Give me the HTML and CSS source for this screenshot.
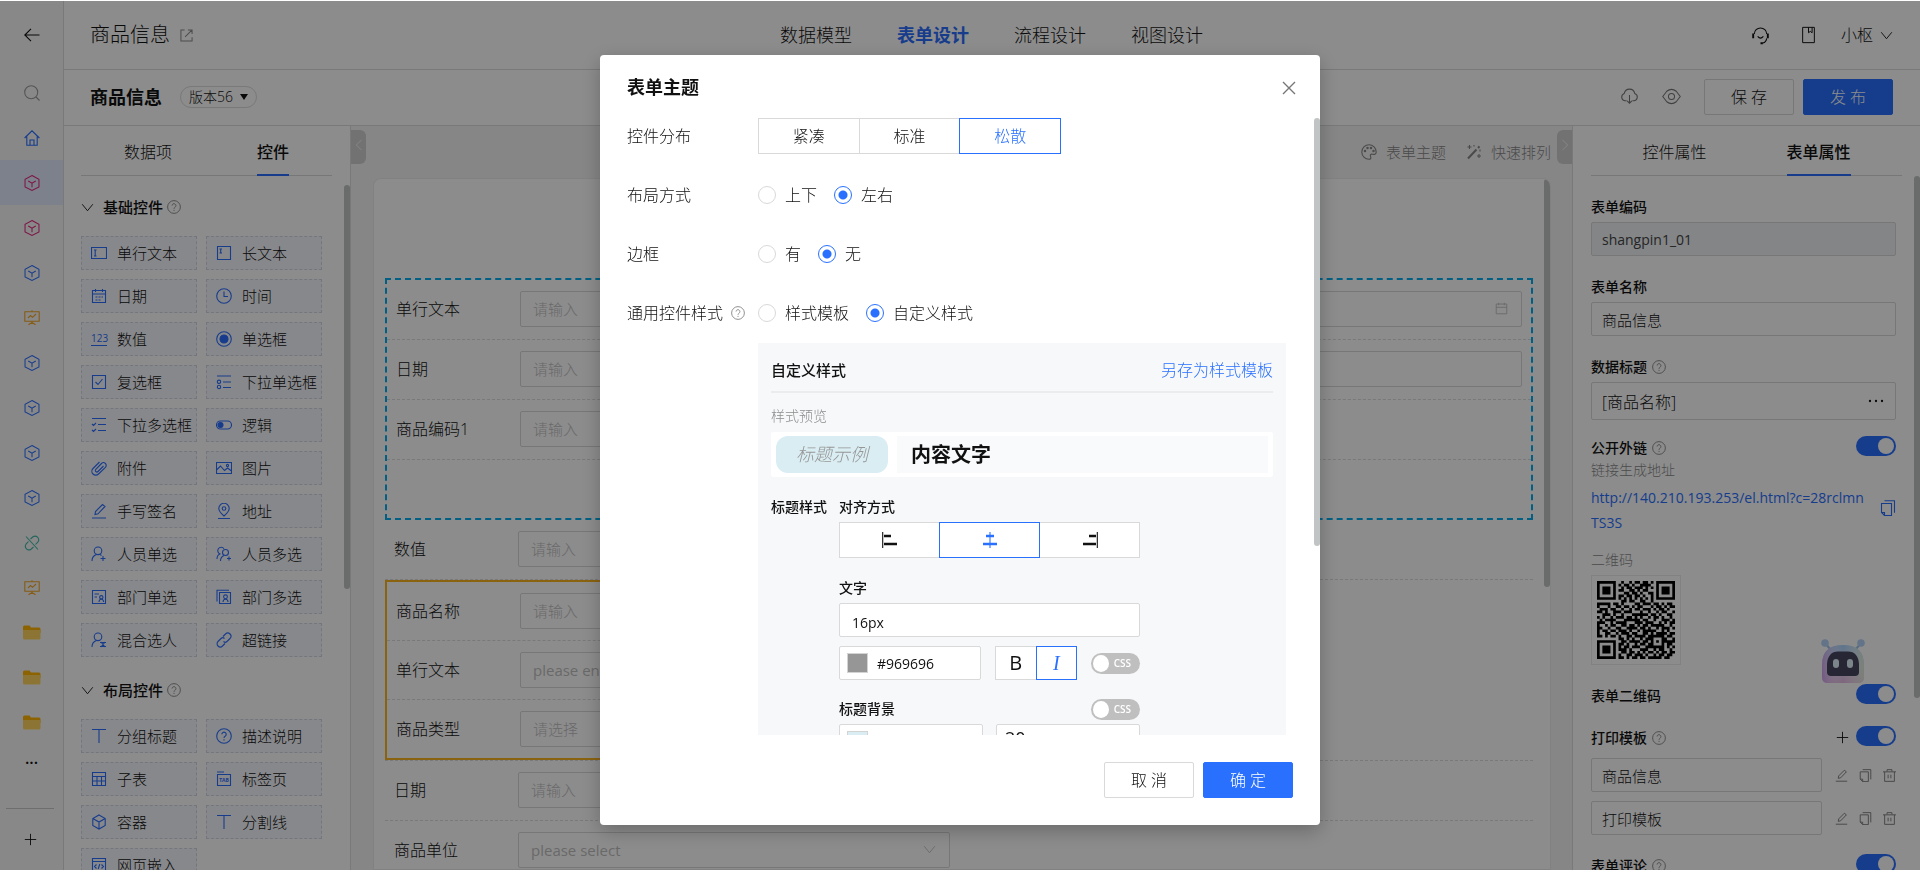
FILE: index.html
```html
<!DOCTYPE html>
<html lang="zh-CN">
<head>
  <meta charset="UTF-8">
  <meta name="viewport" content="width=device-width, initial-scale=1.0">
  <title>商品信息 - 表单设计</title>
  <link rel="stylesheet" href="styles.css">
</head>
<body>
  <!-- Icon sprite -->
  <svg class="sprite" aria-hidden="true">
    <symbol id="i-back" viewBox="0 0 16 16"><path d="M15.5 8H.8M7 1.8.8 8 7 14.2"/></symbol>
    <symbol id="i-search" viewBox="0 0 16 16"><circle cx="7.2" cy="7.2" r="6.5"/><path d="m12 12 3.5 3.5"/></symbol>
    <symbol id="i-home" viewBox="0 0 16 16"><path d="M.6 8 8 .8 15.4 8M2.8 6.5v8.7h10.4V6.5M6 15v-5h4v5"/></symbol>
    <symbol id="i-cube" viewBox="0 0 16 17"><path d="M8 .6 15.4 4.600v8L8 16.400.6 12.600v-8zM4 6.400l4 2.300 4-2.300M8 8.700v4.300"/></symbol>
    <symbol id="i-board" viewBox="0 0 16 16"><path d="M.8 1.800h14.400v9.400H.8zM8 .3v1.500M4 8l2.500-2.500 2 1.800L12 4M8 11.500v2.500M4.500 14.800 8 12.500l3.500 2.300"/></symbol>
    <symbol id="i-unlink" viewBox="0 0 16 16"><path d="M2 1.500 14 14.500M6.500 4 9 1.800a3.600 3.600 0 0 1 5 5L11.500 9.500M9.500 12 7 14.200a3.600 3.600 0 0 1-5-5L4.500 6.500"/></symbol>
    <symbol id="i-folder" viewBox="0 0 18 15"><path class="f1" d="M0 2Q0 .5 1.500.5H6.500l1.500 2H16q1.500 0 1.500 1.500V8H0z"/><path class="f2" d="M0 5h17.500v8q0 1.500-1.500 1.500H1.500Q0 14.500 0 13z"/></symbol>
    <symbol id="i-plus" viewBox="0 0 16 16"><path d="M8 1v14M1 8h14"/></symbol>
    <symbol id="i-share" viewBox="0 0 14 14"><path d="M5 1H1v12h12V9M8.500 1H13v4.500M13 1 5.500 8.500"/></symbol>
    <symbol id="i-down" viewBox="0 0 16 16"><path d="m1.500 4 6.500 8 6.500-8"/></symbol>
    <symbol id="i-left" viewBox="0 0 16 16"><path d="M11 2 5 8l6 6"/></symbol>
    <symbol id="i-right" viewBox="0 0 16 16"><path d="m5 2 6 6-6 6"/></symbol>
    <symbol id="i-help" viewBox="0 0 16 16"><circle cx="8" cy="8" r="7.300"/><path d="M5.800 6.300a2.200 2.200 0 1 1 3.300 2Q8 9 8 10M8 11.300v1.200"/></symbol>
    <symbol id="i-headset" viewBox="0 0 20 20"><path d="M3.500 8.500a6.500 6.500 0 0 1 13 0M7 11q3 3.500 6 0M16.500 13q-.5 4-4 5"/><path class="bold" d="M2.300 8v5M17.700 8v5M10 18.200h2.500"/></symbol>
    <symbol id="i-book" viewBox="0 0 16 20"><path d="M1.500 1.500h13v17h-13zM8 1.500v6l2-1.500 2 1.500v-6"/></symbol>
    <symbol id="i-cloud" viewBox="0 0 20 16"><path d="M7 12.500H5A4 4 0 0 1 4.500 4.800a5.600 5.600 0 0 1 11 0A4 4 0 0 1 15 12.500h-2M10 6.500v8.500M7.500 12.500 10 15l2.500-2.500"/></symbol>
    <symbol id="i-eye" viewBox="0 0 20 16"><path d="M.8 8 5 2.500Q10-1.500 15 2.500L19.200 8 15 13.500q-5 4-10 0z"/><circle cx="10" cy="8" r="3.200"/></symbol>
    <symbol id="i-palette" viewBox="0 0 16 16"><path d="M8 15.200A7.200 7.200 0 1 1 15.200 8c0 2.500-2 2.500-3.500 2.200-2-.4-3 .8-2 2.800.6 1.200-.2 2.200-1.700 2.200z"/><circle cx="4" cy="7" r=".7"/><circle cx="6.500" cy="4" r=".7"/><circle cx="10" cy="4" r=".7"/><circle cx="12.500" cy="7" r=".7"/></symbol>
    <symbol id="i-wand" viewBox="0 0 16 16"><path class="bold" d="M2 14.500 10.500 5.500M12 4l1.500-1.700"/><path d="M3.500 1v4M1.500 3h4M13 10v4M11 12h4M14 5.500v2M8 1v1.500"/></symbol>
    <symbol id="i-text" viewBox="0 0 16 16"><path d="M.5 2.500h15v11H.5zM3 5h2.500M3 11h2.500M4.200 5v6"/></symbol>
    <symbol id="i-longtext" viewBox="0 0 16 16"><path d="M1.500 1.500h13v13h-13zM3.500 4H6M3.500 8H6M4.700 4v4"/></symbol>
    <symbol id="i-date" viewBox="0 0 16 16"><path d="M1.500 2.500h13v12h-13zM1.500 6h13M4.500 1v3M11.500 1v3M4.500 9h2M7.500 9h2M10.500 9h1.500M4.500 12h2M7.500 12h2"/></symbol>
    <symbol id="i-calendar" viewBox="0 0 16 16"><path d="M1.500 2.500h13v12h-13zM1.500 6.500h13M4.500 1v3M11.500 1v3"/></symbol>
    <symbol id="i-time" viewBox="0 0 16 16"><circle cx="8" cy="8" r="7.300"/><path d="M8 3.500V8.500h4"/></symbol>
    <symbol id="i-radio" viewBox="0 0 16 16"><circle cx="8" cy="8" r="7.300"/><circle class="solid" cx="8" cy="8" r="4"/></symbol>
    <symbol id="i-check" viewBox="0 0 16 16"><path d="M1.500 1.500h13v13h-13zM4.500 8l2.500 2.500L11.500 5"/></symbol>
    <symbol id="i-selone" viewBox="0 0 16 16"><path d="M1 2h14M7 8h8M7 13.500h8"/><circle cx="3" cy="7.800" r="1.700"/><circle cx="3" cy="13" r="1.700"/></symbol>
    <symbol id="i-selmulti" viewBox="0 0 16 16"><path d="M1 1.500h14M7 7.500h8M7 13.500h8M1 7l1.500 1.500L5 6M1 13l1.500 1.500L5 12"/></symbol>
    <symbol id="i-logic" viewBox="0 0 16 16"><rect x=".5" y="4" width="15" height="8" rx="4"/><circle class="solid" cx="4.500" cy="8" r="2.500"/></symbol>
    <symbol id="i-clip" viewBox="0 0 16 16"><path d="M12.500 6 7 11.500a1.500 1.500 0 0 1-2.200-2.200L10.500 3.500a2.700 2.700 0 0 1 3.900 3.900L7.500 14a3.700 3.700 0 0 1-5.500-5.500L8.500 2"/></symbol>
    <symbol id="i-img" viewBox="0 0 16 16"><path d="M.5 2.500h15v11H.5zM.5 10l4-4 4 4.500 3-2.500 4 3"/><circle cx="11.500" cy="5.500" r="1.100"/></symbol>
    <symbol id="i-pen" viewBox="0 0 16 16"><path d="M1 15h14M4 11.500l.5-3L11.500 1.500l2.500 2L7 10.800z"/></symbol>
    <symbol id="i-pin" viewBox="0 0 16 16"><path d="M8 13Q2.800 8.500 2.800 5.500a5.200 5.200 0 0 1 10.400 0Q13.200 8.500 8 13zM2 15.500h12"/><circle cx="8" cy="5.500" r="1.800"/></symbol>
    <symbol id="i-user" viewBox="0 0 16 16"><circle cx="7" cy="4.800" r="3.800"/><path d="M1 15q0-5 4.500-6.500M9 8.500l1.500 1M12 10v5M9.500 12.500h5"/></symbol>
    <symbol id="i-users" viewBox="0 0 16 16"><path d="M4.500 8A3.400 3.400 0 1 1 8 2.800M1 13q0-4 3-5"/><circle cx="9.500" cy="6.500" r="3"/><path d="M4.500 15q0-4 3.500-5.500M13 10.500v4M11 12.500h4"/></symbol>
    <symbol id="i-dept" viewBox="0 0 16 16"><path d="M1.500 1.500h13v13h-13zM3.500 5H8M3.500 8H6M8 13q0-2.500 2.300-3 2.300.5 2.300 3"/><circle cx="10.300" cy="8.300" r="1.700"/></symbol>
    <symbol id="i-depts" viewBox="0 0 16 16"><path d="M3.500 3.500h11v11h-11zM1 12.500V1.200h12M7 13q0-2.500 2.500-3 2.500.5 2.500 3"/><circle cx="9.500" cy="7.800" r="1.900"/></symbol>
    <symbol id="i-mix" viewBox="0 0 16 16"><circle cx="7" cy="4.800" r="3.800"/><path d="M1 15q0-5 4.500-6.500M9 10.500h6M15 14.500H9M10 10l4 5M14 10l-4 5"/></symbol>
    <symbol id="i-link" viewBox="0 0 16 16"><path d="M7 4.500 9.500 2a3 3 0 0 1 4.500 4.500L11 9.500a2.500 2.500 0 0 1-3.500 0M9 11.500 6.500 14A3 3 0 0 1 2 9.500L5 6.500a2.500 2.500 0 0 1 3.500 0"/></symbol>
    <symbol id="i-t" viewBox="0 0 16 16"><path d="M1 1.500h14M8 1.500V15"/></symbol>
    <symbol id="i-table" viewBox="0 0 16 16"><path d="M1.500 1.500h13v13h-13zM1.500 5.500h13M1.500 10h13M6 5.500v9M10.500 5.500v9"/></symbol>
    <symbol id="i-box" viewBox="0 0 16 16"><path d="M8 1l6.200 3.500v7L8 15l-6.200-3.500v-7zM1.800 4.500 8 8l6.200-3.500M8 8v7"/></symbol>
    <symbol id="i-web" viewBox="0 0 16 16"><path d="M1.500 1.500h13v13h-13zM1.500 4.500h13M5.500 7.500l-2 2 2 2M10.500 7.500l2 2-2 2M8.800 7l-1.600 5"/></symbol>
    <symbol id="i-copy" viewBox="0 0 16 16"><path d="M1.500 3.500h10v12H4.500l-3-3zM4.500.8h10v12M1.500 12.500h3v3"/></symbol>
    <symbol id="i-trash" viewBox="0 0 16 16"><path d="M0 3.500h16M5 3V.8h6V3M2 3.500v11.700h12V3.500M6.300 7v4.500M9.700 7v4.500"/></symbol>
    <symbol id="i-dots" viewBox="0 0 16 16"><circle class="solid" cx="2" cy="8" r=".6"/><circle class="solid" cx="8" cy="8" r=".6"/><circle class="solid" cx="14" cy="8" r=".6"/></symbol>
    <symbol id="i-close" viewBox="0 0 16 16"><path d="m2 2 12 12M14 2 2 14"/></symbol>
    <symbol id="i-al" viewBox="0 0 16 16"><path d="M.7 0v16"/><path class="bar" d="M2 4h7M2 12h13"/></symbol>
    <symbol id="i-ac" viewBox="0 0 16 16"><path d="M8 0v16"/><path class="bar" d="M4 4h8M1 12h14"/></symbol>
    <symbol id="i-ar" viewBox="0 0 16 16"><path d="M15.300 0v16"/><path class="bar" d="M7 4h7M1 12h13"/></symbol>
    <symbol id="i-bot" viewBox="0 0 44 46">
      <defs>
        <linearGradient id="bot-g" x1="0" y1="0" x2="0" y2="1">
          <stop offset="0" stop-color="#a9d4ff"/><stop offset=".55" stop-color="#dcdcf2"/><stop offset="1" stop-color="#e6b8e4"/>
        </linearGradient>
        <linearGradient id="bot-s" x1="0" y1="0" x2="1" y2="0">
          <stop offset="0" stop-color="#cf9bef" stop-opacity=".8"/><stop offset=".5" stop-color="#fff" stop-opacity="0"/><stop offset="1" stop-color="#dff0d8" stop-opacity=".8"/>
        </linearGradient>
      </defs>
      <path class="ant" d="m4 4 5 6M40 4l-5 6"/>
      <circle class="knob" cx="4" cy="4" r="3.800"/><circle class="knob" cx="40" cy="4" r="3.800"/>
      <path class="h1" d="M1 26Q1 6 22 6t21 20v12q0 6-6 6H7q-6 0-6-6z"/>
      <path class="h2" d="M1 26Q1 6 22 6t21 20v12q0 6-6 6H7q-6 0-6-6z"/>
      <path class="face" d="M6 25Q7 12.500 17 12.500h10q10 0 11 12.500v8q0 4-4 4H10q-4 0-4-4z"/>
      <rect class="eye" x="12" y="20" width="6" height="9" rx="3"/><rect class="eye" x="26" y="20" width="6" height="9" rx="3"/>
    </symbol>
  </svg>

  <div class="shell">
    <nav class="rail" aria-label="应用导航">
      <a class="rail-item back" href="#" aria-label="返回"><svg class="icon"><use href="#i-back"/></svg></a>
      <a class="rail-item muted" href="#" aria-label="搜索"><svg class="icon"><use href="#i-search"/></svg></a>
      <a class="rail-item blue" href="#" aria-label="首页"><svg class="icon"><use href="#i-home"/></svg></a>
      <a class="rail-item pink active" href="#" aria-label="应用"><svg class="icon"><use href="#i-cube"/></svg></a>
      <a class="rail-item pink" href="#" aria-label="应用"><svg class="icon"><use href="#i-cube"/></svg></a>
      <a class="rail-item blue" href="#" aria-label="应用"><svg class="icon"><use href="#i-cube"/></svg></a>
      <a class="rail-item orange" href="#" aria-label="报表"><svg class="icon"><use href="#i-board"/></svg></a>
      <a class="rail-item blue" href="#" aria-label="应用"><svg class="icon"><use href="#i-cube"/></svg></a>
      <a class="rail-item blue" href="#" aria-label="应用"><svg class="icon"><use href="#i-cube"/></svg></a>
      <a class="rail-item blue" href="#" aria-label="应用"><svg class="icon"><use href="#i-cube"/></svg></a>
      <a class="rail-item blue" href="#" aria-label="应用"><svg class="icon"><use href="#i-cube"/></svg></a>
      <a class="rail-item teal" href="#" aria-label="外链"><svg class="icon"><use href="#i-unlink"/></svg></a>
      <a class="rail-item orange" href="#" aria-label="报表"><svg class="icon"><use href="#i-board"/></svg></a>
      <a class="rail-item" href="#" aria-label="文件夹"><svg class="icon folder"><use href="#i-folder"/></svg></a>
      <a class="rail-item" href="#" aria-label="文件夹"><svg class="icon folder"><use href="#i-folder"/></svg></a>
      <a class="rail-item" href="#" aria-label="文件夹"><svg class="icon folder"><use href="#i-folder"/></svg></a>
      <a class="rail-item more" href="#">...</a>
      <a class="rail-item add" href="#" aria-label="新增"><svg class="icon sm"><use href="#i-plus"/></svg></a>
    </nav>

    <div class="workspace">
      <header class="topbar">
        <div class="topbar-title">商品信息 <svg class="icon sm"><use href="#i-share"/></svg></div>
        <nav class="topbar-nav">
          <a href="#">数据模型</a>
          <a class="active" href="#">表单设计</a>
          <a href="#">流程设计</a>
          <a href="#">视图设计</a>
        </nav>
        <div class="topbar-user">
          <svg class="icon lg"><use href="#i-headset"/></svg>
          <svg class="icon book"><use href="#i-book"/></svg>
          <button class="user-btn" type="button">小枢 <svg class="icon sm"><use href="#i-down"/></svg></button>
        </div>
      </header>

      <div class="subbar">
        <h1>商品信息</h1>
        <button class="version" type="button">版本56 <span class="caret"></span></button>
        <div class="subbar-actions">
          <svg class="icon lg"><use href="#i-cloud"/></svg>
          <svg class="icon lg"><use href="#i-eye"/></svg>
          <button class="btn" type="button">保 存</button>
          <button class="btn primary" type="button">发 布</button>
        </div>
      </div>

      <div class="designer">
        <!-- Widget palette -->
        <aside class="palette">
          <div class="tabs">
            <button class="tab" type="button">数据项</button>
            <button class="tab active" type="button">控件</button>
          </div>
          <section class="widget-group">
            <h2><svg class="icon sm"><use href="#i-down"/></svg>基础控件<svg class="icon help"><use href="#i-help"/></svg></h2>
            <div class="widgets">
              <button type="button"><svg class="icon"><use href="#i-text"/></svg>单行文本</button>
              <button type="button"><svg class="icon"><use href="#i-longtext"/></svg>长文本</button>
              <button type="button"><svg class="icon"><use href="#i-date"/></svg>日期</button>
              <button type="button"><svg class="icon"><use href="#i-time"/></svg>时间</button>
              <button type="button"><span class="num-icon" aria-hidden="true">123</span>数值</button>
              <button type="button"><svg class="icon"><use href="#i-radio"/></svg>单选框</button>
              <button type="button"><svg class="icon"><use href="#i-check"/></svg>复选框</button>
              <button type="button"><svg class="icon"><use href="#i-selone"/></svg>下拉单选框</button>
              <button type="button"><svg class="icon"><use href="#i-selmulti"/></svg>下拉多选框</button>
              <button type="button"><svg class="icon"><use href="#i-logic"/></svg>逻辑</button>
              <button type="button"><svg class="icon"><use href="#i-clip"/></svg>附件</button>
              <button type="button"><svg class="icon"><use href="#i-img"/></svg>图片</button>
              <button type="button"><svg class="icon"><use href="#i-pen"/></svg>手写签名</button>
              <button type="button"><svg class="icon"><use href="#i-pin"/></svg>地址</button>
              <button type="button"><svg class="icon"><use href="#i-user"/></svg>人员单选</button>
              <button type="button"><svg class="icon"><use href="#i-users"/></svg>人员多选</button>
              <button type="button"><svg class="icon"><use href="#i-dept"/></svg>部门单选</button>
              <button type="button"><svg class="icon"><use href="#i-depts"/></svg>部门多选</button>
              <button type="button"><svg class="icon"><use href="#i-mix"/></svg>混合选人</button>
              <button type="button"><svg class="icon"><use href="#i-link"/></svg>超链接</button>
            </div>
          </section>
          <section class="widget-group">
            <h2><svg class="icon sm"><use href="#i-down"/></svg>布局控件<svg class="icon help"><use href="#i-help"/></svg></h2>
            <div class="widgets">
              <button type="button"><svg class="icon"><use href="#i-t"/></svg>分组标题</button>
              <button type="button"><svg class="icon"><use href="#i-help"/></svg>描述说明</button>
              <button type="button"><svg class="icon"><use href="#i-table"/></svg>子表</button>
              <button type="button"><svg class="icon" viewBox="0 0 16 16"><path d="M1.500 3.500h13v11h-13zM1 1h7"/><text x="8" y="11" text-anchor="middle">TAB</text></svg>标签页</button>
              <button type="button"><svg class="icon"><use href="#i-box"/></svg>容器</button>
              <button type="button"><svg class="icon"><use href="#i-t"/></svg>分割线</button>
              <button type="button"><svg class="icon"><use href="#i-web"/></svg>网页嵌入</button>
            </div>
          </section>
          <span class="thumb palette-thumb"></span>
        </aside>

        <!-- Form canvas -->
        <main class="canvas">
          <button class="fold fold-left" type="button" aria-label="收起控件"><svg class="icon"><use href="#i-left"/></svg></button>
          <button class="fold fold-right" type="button" aria-label="收起属性"><svg class="icon"><use href="#i-right"/></svg></button>
          <div class="canvas-tools">
            <button type="button"><svg class="icon"><use href="#i-palette"/></svg>表单主题</button>
            <button type="button"><svg class="icon"><use href="#i-wand"/></svg>快速排列</button>
          </div>
          <div class="form-card">
            <div class="box box-dashed">
              <div class="form-row">
                <div class="field"><label for="f1">单行文本</label><input id="f1" type="text" placeholder="请输入"></div>
                <div class="field"><span class="field-gap"></span><div class="with-icon"><input type="text" aria-label="日期"><svg class="icon sm"><use href="#i-calendar"/></svg></div></div>
              </div>
              <div class="form-row">
                <div class="field"><label for="f2">日期</label><input id="f2" type="text" placeholder="请输入"></div>
                <div class="field"><span class="field-gap"></span><input type="text" aria-label="文本"></div>
              </div>
              <div class="form-row">
                <div class="field"><label for="f3">商品编码1</label><input id="f3" type="text" placeholder="请输入"></div>
              </div>
            </div>
            <div class="form-row">
              <div class="field"><label for="f4">数值</label><input id="f4" type="text" placeholder="请输入"></div>
            </div>
            <div class="half">
              <div class="box box-solid">
                <div class="form-row">
                  <div class="field"><label for="f5">商品名称</label><input id="f5" type="text" placeholder="请输入"></div>
                </div>
                <div class="form-row">
                  <div class="field"><label for="f6">单行文本</label><input class="latin" id="f6" type="text" placeholder="please enter"></div>
                </div>
                <div class="form-row">
                  <div class="field"><label for="f7">商品类型</label><select id="f7"><option>请选择</option></select></div>
                </div>
              </div>
            </div>
            <div class="form-row">
              <div class="field"><label for="f8">日期</label><input id="f8" type="text" placeholder="请输入"></div>
            </div>
            <div class="form-row">
              <div class="field"><label for="f9">商品单位</label><div class="with-icon"><select class="latin" id="f9"><option>please select</option></select><svg class="icon sm"><use href="#i-down"/></svg></div></div>
            </div>
            <span class="thumb canvas-thumb"></span>
          </div>
        </main>

        <!-- Form properties -->
        <aside class="props">
          <div class="tabs">
            <button class="tab" type="button">控件属性</button>
            <button class="tab active" type="button">表单属性</button>
          </div>
          <div class="props-body">
            <label class="prop-label" for="p1">表单编码</label>
            <input class="prop-input latin" id="p1" type="text" value="shangpin1_01" disabled>
            <label class="prop-label" for="p2">表单名称</label>
            <input class="prop-input" id="p2" type="text" value="商品信息">
            <label class="prop-label" for="p3">数据标题<svg class="icon help"><use href="#i-help"/></svg></label>
            <div class="title-expr"><input id="p3" type="text" value="[商品名称]"><button type="button" aria-label="更多"><svg class="icon"><use href="#i-dots"/></svg></button></div>
            <div class="prop-switch first">
              <label for="s1">公开外链</label><svg class="icon help"><use href="#i-help"/></svg>
              <input class="switch" id="s1" type="checkbox" checked>
            </div>
            <p class="hint">链接生成地址</p>
            <div class="share-link">
              <a class="latin" href="#">http://140.210.193.253/el.html?c=28rclmnTS3S</a>
              <button type="button" aria-label="复制"><svg class="icon"><use href="#i-copy"/></svg></button>
            </div>
            <p class="hint">二维码</p>
            <div class="qr"><svg id="qr" viewBox="0 0 29 29" role="img" aria-label="二维码"></svg></div>
            <div class="prop-switch">
              <label for="s2">表单二维码</label>
              <input class="switch" id="s2" type="checkbox" checked>
            </div>
            <div class="prop-switch">
              <label for="s3">打印模板</label><svg class="icon help"><use href="#i-help"/></svg>
              <button class="add-tpl" type="button" aria-label="新增模板"><svg class="icon sm"><use href="#i-plus"/></svg></button>
              <input class="switch" id="s3" type="checkbox" checked>
            </div>
            <div class="tpl">
              <input type="text" value="商品信息" aria-label="打印模板名称">
              <button type="button" aria-label="编辑"><svg class="icon sm"><use href="#i-pen"/></svg></button>
              <button type="button" aria-label="复制"><svg class="icon sm"><use href="#i-copy"/></svg></button>
              <button type="button" aria-label="删除"><svg class="icon sm"><use href="#i-trash"/></svg></button>
            </div>
            <div class="tpl">
              <input type="text" value="打印模板" aria-label="打印模板名称">
              <button type="button" aria-label="编辑"><svg class="icon sm"><use href="#i-pen"/></svg></button>
              <button type="button" aria-label="复制"><svg class="icon sm"><use href="#i-copy"/></svg></button>
              <button type="button" aria-label="删除"><svg class="icon sm"><use href="#i-trash"/></svg></button>
            </div>
            <div class="prop-switch">
              <label for="s4">表单评论</label><svg class="icon help"><use href="#i-help"/></svg>
              <input class="switch" id="s4" type="checkbox" checked>
            </div>
          </div>
          <span class="thumb props-thumb"></span>
        </aside>
      </div>
    </div>
    <svg class="bot"><use href="#i-bot"/></svg>
  </div>

  <!-- Theme dialog -->
  <div class="mask">
    <div class="modal" role="dialog" aria-labelledby="modal-title">
      <div class="modal-head">
        <h2 id="modal-title">表单主题</h2>
        <button type="button" aria-label="关闭"><svg class="icon"><use href="#i-close"/></svg></button>
      </div>
      <div class="modal-body">
        <div class="opt-row">
          <span class="opt-label">控件分布</span>
          <div class="segment">
            <button type="button">紧凑</button>
            <button type="button">标准</button>
            <button class="active" type="button">松散</button>
          </div>
        </div>
        <div class="opt-row">
          <span class="opt-label">布局方式</span>
          <label class="radio"><input type="radio" name="layout">上下</label>
          <label class="radio"><input type="radio" name="layout" checked>左右</label>
        </div>
        <div class="opt-row">
          <span class="opt-label">边框</span>
          <label class="radio"><input type="radio" name="border">有</label>
          <label class="radio"><input type="radio" name="border" checked>无</label>
        </div>
        <div class="opt-row">
          <span class="opt-label">通用控件样式<svg class="icon help"><use href="#i-help"/></svg></span>
          <label class="radio"><input type="radio" name="style">样式模板</label>
          <label class="radio"><input type="radio" name="style" checked>自定义样式</label>
        </div>

        <div class="custom">
          <div class="custom-head"><h3>自定义样式</h3><a href="#">另存为样式模板</a></div>
          <p class="custom-caption">样式预览</p>
          <div class="preview">
            <span class="preview-title">标题示例</span>
            <span class="preview-content">内容文字</span>
          </div>
          <div class="style-form">
            <h4>标题样式</h4>
            <div class="style-fields">
              <h4>对齐方式</h4>
              <div class="segment">
                <button type="button" aria-label="左对齐"><svg class="icon"><use href="#i-al"/></svg></button>
                <button class="active" type="button" aria-label="居中"><svg class="icon"><use href="#i-ac"/></svg></button>
                <button type="button" aria-label="右对齐"><svg class="icon"><use href="#i-ar"/></svg></button>
              </div>
              <label class="style-label" for="fs">文字</label>
              <input class="size-input latin" id="fs" type="text" value="16px">
              <div class="text-row">
                <div class="color"><span class="swatch gray"></span><input class="latin" type="text" value="#969696" aria-label="文字颜色"></div>
                <div class="segment bi">
                  <button type="button">B</button>
                  <button class="active italic" type="button">I</button>
                </div>
                <label class="css-switch"><input type="checkbox"><span>CSS</span></label>
              </div>
              <div class="bg-row">
                <h4>标题背景</h4>
                <label class="css-switch"><input type="checkbox"><span>CSS</span></label>
              </div>
              <div class="bg-fields">
                <div class="color"><span class="swatch ice"></span></div>
                <input class="latin" type="text" value="20" aria-label="圆角">
              </div>
            </div>
          </div>
        </div>
        <span class="thumb modal-thumb"></span>
      </div>
      <div class="modal-foot">
        <button class="btn" type="button">取 消</button>
        <button class="btn primary" type="button">确 定</button>
      </div>
    </div>
  </div>
  <script src="script.js"></script>
</body>
</html>
```
FILE: styles.css
```css
* {
  box-sizing: border-box;
}
html, body {
  height: 100%;
}
body {
  margin: 0;
  padding-top: 1px;
  overflow: hidden;
  background: #fff;
  color: #111;
  font-family: "Open Sans", "Noto Sans CJK SC", sans-serif;
  font-weight: 300;
  font-size: 16px;
  line-height: 22px;
}
h1, h2, h3, h4, p {
  margin: 0;
}
a {
  color: inherit;
  text-decoration: none;
}
button, input, select {
  font: inherit;
  color: inherit;
  margin: 0;
}
button {
  padding: 0;
  border: 0;
  background: none;
  cursor: pointer;
}
input[type="text"], select {
  min-width: 0;
  width: 100%;
  height: 36px;
  padding: 0 12px;
  border: 1px solid #d9d9d9;
  border-radius: 2px;
  background: #fff;
  appearance: none;
}
input::placeholder {
  color: #bfbfbf;
}
.latin {
  font-weight: 400;
}

/* icons */
.sprite {
  position: absolute;
  width: 0;
  height: 0;
}
.icon {
  flex: none;
  width: 16px;
  height: 16px;
  fill: none;
  stroke: currentColor;
  stroke-width: 1.1;
}
.icon.sm {
  width: 13px;
  height: 13px;
}
.icon.lg {
  width: 19px;
  height: 19px;
}
.icon.book {
  width: 15px;
  height: 18px;
}
.icon.help {
  width: 14px;
  height: 14px;
  color: #8c8c8c;
}
.icon text {
  fill: currentColor;
  stroke: none;
  font: 700 5px "Open Sans", sans-serif;
}
.bold {
  stroke-width: 2;
}
.bar {
  stroke-width: 2.4;
}
.solid {
  fill: currentColor;
}
.f1 {
  fill: #ffb400;
  stroke: none;
}
.f2 {
  fill: #ffd560;
  stroke: none;
}

.thumb {
  position: absolute;
  width: 6px;
  border-radius: 3px;
  background: #c1c4c4;
}

/* shell */
.shell {
  display: flex;
  height: 100%;
  background: #fff;
}
.rail {
  display: flex;
  flex: none;
  flex-direction: column;
  width: 64px;
  border-right: 1px solid #dcdcdc;
  background: #f7f8fa;
}
.rail-item {
  display: flex;
  flex: none;
  align-items: center;
  justify-content: center;
  height: 45px;
}
.rail-item.back {
  height: 67px;
  margin-bottom: 2px;
}
.rail-item.active {
  background: #e2ebfd;
}
.muted { color: #999; }
.blue { color: #2b6dff; }
.pink { color: #e6237c; }
.orange { color: #f5a623; }
.teal { color: #3fb8a5; }
.folder {
  width: 18px;
  height: 15px;
}
.rail-item.more {
  height: 32px;
  padding-bottom: 6px;
  font-weight: 600;
}
.rail-item.add {
  margin: 31px 9px 0 6px;
  height: 62px;
  border-top: 1px solid #c8c8ca;
}
.workspace {
  display: flex;
  flex: 1;
  flex-direction: column;
  min-width: 0;
}
.topbar {
  display: grid;
  flex: none;
  grid-template-columns: 1fr auto 1fr;
  align-items: center;
  height: 69px;
  padding: 0 27px 0 26px;
  border-bottom: 1px solid #dcdcdc;
}
.topbar-title {
  display: flex;
  align-items: center;
  gap: 10px;
  font-size: 20px;
}
.topbar-title .icon {
  color: #8c8c8c;
}
.topbar-nav {
  display: flex;
  gap: 45px;
  font-size: 18px;
}
.topbar-nav .active {
  color: #2b6dff;
  font-weight: 700;
}
.topbar-user {
  display: flex;
  align-items: center;
  justify-content: flex-end;
  gap: 25px;
}
.topbar-user .lg {
  margin-right: 6px;
}
.user-btn {
  display: flex;
  align-items: center;
  gap: 7px;
}
.subbar {
  display: flex;
  flex: none;
  align-items: center;
  height: 56px;
  padding: 0 27px 2px 26px;
  border-bottom: 1px solid #dcdcdc;
}
.subbar h1 {
  font-size: 18px;
  font-weight: 700;
}
.version {
  display: flex;
  align-items: center;
  gap: 7px;
  height: 22px;
  margin-left: 18px;
  padding: 0 8px;
  border: 1px solid #dcdcdc;
  border-radius: 11px;
  font-size: 14px;
}
.caret {
  border: 4px solid transparent;
  border-top: 6px solid #111;
  border-bottom: 0;
}
.subbar-actions {
  display: flex;
  align-items: center;
  gap: 9px;
  margin-left: auto;
}
.subbar-actions .icon {
  margin-right: 14px;
  color: #777;
}
.btn {
  width: 90px;
  height: 36px;
  border: 1px solid #d9d9d9;
  border-radius: 2px;
  background: #fff;
}
.btn.primary {
  border-color: #2970ff;
  background: #2970ff;
  color: #fff;
}
.designer {
  display: flex;
  flex: 1;
  min-height: 0;
}

/* palette */
.tabs {
  display: flex;
  justify-content: center;
  gap: 80px;
  height: 50px;
  border-bottom: 1px solid #d9d9d9;
}
.palette .tabs {
  gap: 85px;
}
.tab {
  height: 50px;
  padding-top: 4px;
  border-bottom: 2px solid transparent;
}
.tab.active {
  border-bottom-color: #2b6dff;
  font-weight: 500;
}
.palette {
  position: relative;
  flex: none;
  width: 287px;
  padding: 0 18px 0 17px;
  border-right: 1px solid #dcdcdc;
  overflow: hidden;
}
.palette-thumb {
  top: 59px;
  right: 0;
  height: 404px;
}
.widget-group {
  padding-top: 20px;
}
.widget-group + .widget-group {
  padding-top: 22px;
}
.widget-group h2 {
  display: flex;
  align-items: center;
  margin-bottom: 18px;
  font-size: 15px;
  font-weight: 500;
}
.widget-group h2 .icon.sm {
  margin-right: 9px;
}
.widget-group h2 .help {
  margin-left: 4px;
}
.widgets {
  display: grid;
  grid-template-columns: 1fr 1fr;
  gap: 9px;
  margin-right: 10px;
}
.widgets button {
  display: flex;
  align-items: center;
  gap: 10px;
  height: 34px;
  padding-left: 9px;
  border: 1px dashed #d3d8e3;
  background: #f6f8fd;
  font-size: 15px;
  white-space: nowrap;
}
.widgets .icon {
  color: #2b6dff;
}
.num-icon {
  width: 16px;
  border-bottom: 1px solid #2b6dff;
  color: #2b6dff;
  font-size: 10px;
  font-weight: 400;
  line-height: 13px;
  text-align: center;
}

/* canvas */
.canvas {
  position: relative;
  display: flex;
  flex: 1;
  flex-direction: column;
  min-width: 0;
  padding: 0 21px 0 22px;
  background: #f4f4f5;
}
.fold {
  position: absolute;
  top: 4px;
  width: 15px;
  height: 34px;
  background: #cfcfcf;
  color: #f4f4f4;
}
.fold .icon {
  width: 14px;
}
.fold-left {
  left: 0;
  border-radius: 0 6px 6px 0;
}
.fold-right {
  right: 0;
  border-radius: 6px 0 0 6px;
}
.canvas-tools {
  display: flex;
  flex: none;
  align-items: center;
  justify-content: flex-end;
  gap: 20px;
  height: 52px;
  color: #888;
  font-size: 15px;
}
.canvas-tools button {
  display: flex;
  align-items: center;
  gap: 9px;
}
.form-card {
  position: relative;
  flex: 1;
  min-height: 0;
  padding: 99px 17px 0 11px;
  border: 1px solid #ececec;
  border-radius: 8px 8px 0 0;
  background: #fff;
  overflow: hidden;
}
.canvas-thumb {
  top: 0;
  right: 0;
  height: 408px;
}
.box-dashed {
  min-height: 242px;
  border: 2px dashed #00aeef;
}
.box-solid {
  width: 50%;
  border: 2px solid #fab41e;
}
.half {
  border-bottom: 1px dashed #dcdcdc;
}
.form-row {
  display: grid;
  grid-template-columns: 1fr 1fr;
  padding: 11px 0 12px;
  border-bottom: 1px dashed #dcdcdc;
}
.box-solid .form-row {
  grid-template-columns: 1fr;
  padding: 11px 0;
}
.box-solid .form-row:last-child {
  border-bottom: 0;
}
.field {
  display: flex;
  align-items: center;
  padding: 0 9px;
}
.field label, .field-gap {
  flex: none;
  width: 124px;
}
.field input, .field select {
  font-size: 15px;
}
.field select {
  color: #bfbfbf;
}
.with-icon {
  position: relative;
  flex: 1;
}
.with-icon .icon {
  position: absolute;
  top: 11px;
  right: 14px;
  color: #bfbfbf;
}

/* properties */
.props {
  position: relative;
  flex: none;
  width: 348px;
  padding: 0 18px;
  border-left: 1px solid #dcdcdc;
  overflow: hidden;
}
.props-thumb {
  top: 50px;
  right: 0;
  height: 522px;
}
.props-body {
  padding-right: 6px;
}
.prop-label {
  display: flex;
  align-items: center;
  gap: 5px;
  margin: 20px 0 4px;
  font-size: 14px;
  font-weight: 500;
}
.prop-input[type="text"] {
  display: block;
  height: 34px;
  padding: 0 10px;
  font-size: 15px;
}
.prop-input[type="text"]:disabled {
  background: #f0f2f5;
  color: #444;
  font-size: 14px;
}
.title-expr {
  display: flex;
  align-items: center;
  height: 38px;
  padding-right: 11px;
  border: 1px solid #d9d9d9;
  border-radius: 2px;
}
.title-expr input[type="text"] {
  padding: 0 10px;
  border: 0;
  background: none;
}
.title-expr button {
  display: flex;
}
.prop-switch {
  display: flex;
  align-items: center;
  margin: 19px 0 0;
  font-size: 14px;
  font-weight: 500;
}
.prop-switch.first {
  margin-top: 16px;
}
.prop-switch .help {
  margin-left: 5px;
}
.switch {
  position: relative;
  width: 40px;
  height: 20px;
  margin: 0 0 3px auto;
  border-radius: 10px;
  background: #2970ff;
  appearance: none;
}
.switch::after {
  content: "";
  position: absolute;
  top: 2px;
  right: 2px;
  width: 16px;
  height: 16px;
  border-radius: 50%;
  background: #fff;
}
.add-tpl {
  display: flex;
  margin-left: auto;
}
.add-tpl + .switch {
  margin-left: 7px;
}
.hint {
  color: #8c8c8c;
  font-size: 14px;
}
.share-link {
  display: flex;
  align-items: center;
  margin: 4px 0 14px;
}
.share-link a {
  flex: 1;
  padding-right: 12px;
  color: #2970ff;
  font-size: 14px;
  line-height: 25px;
  word-break: break-all;
}
.share-link button {
  color: #2970ff;
}
.qr {
  display: flex;
  width: 90px;
  height: 90px;
  margin-top: 4px;
  padding: 5px;
  border: 1px solid #ececec;
  background: #fff;
}
.qr svg {
  width: 78px;
  height: 78px;
}
.tpl {
  display: flex;
  align-items: center;
  gap: 11px;
  margin-top: 9px;
}
.tpl input[type="text"] {
  flex: 1;
  height: 34px;
  margin-right: 2px;
  padding: 0 10px;
  font-size: 15px;
}
.tpl button {
  display: flex;
  color: #777;
}
.bot {
  position: fixed;
  right: 55px;
  bottom: 185px;
  width: 44px;
  height: 46px;
}
.ant {
  stroke: #a5c4ea;
  stroke-width: 2;
}
.knob { fill: #b5d3fa; }
.h1 { fill: url(#bot-g); }
.h2 { fill: url(#bot-s); }
.face { fill: #454560; }
.eye { fill: #e2f2fa; }

/* dialog */
.mask {
  position: fixed;
  inset: 1px 0 0;
  display: flex;
  align-items: flex-start;
  justify-content: center;
  padding-top: 54px;
  background: rgba(0, 0, 0, .45);
}
.modal {
  display: flex;
  flex-direction: column;
  width: 720px;
  height: calc(100vh - 100px);
  border-radius: 4px;
  background: #fff;
  box-shadow: 0 6px 20px rgba(0, 0, 0, .25);
}
.modal-head {
  display: flex;
  flex: none;
  align-items: center;
  justify-content: space-between;
  height: 63px;
  padding: 0 23px 0 27px;
}
.modal-head h2 {
  font-size: 18px;
  font-weight: 700;
}
.modal-head button {
  display: flex;
  padding-top: 2px;
  color: #777;
}
.modal-head .icon {
  stroke-width: 1.4;
}
.modal-body {
  position: relative;
  flex: 1;
  min-height: 0;
  padding: 0 34px 0 27px;
  overflow: hidden;
}
.modal-thumb {
  top: 0;
  right: 0;
  height: 428px;
}
.opt-row {
  display: flex;
  align-items: center;
  height: 36px;
  margin-bottom: 23px;
}
.opt-label {
  display: flex;
  align-items: center;
  gap: 8px;
  width: 131px;
}
.segment {
  display: flex;
  width: 303px;
}
.segment button {
  display: flex;
  flex: 1;
  align-items: center;
  justify-content: center;
  height: 36px;
  border: 1px solid #d9d9d9;
  background: #fff;
}
.segment button + button {
  border-left: 0;
}
.segment button.active {
  margin-left: -1px;
  border: 1px solid #2970ff;
  color: #2970ff;
}
.radio {
  display: flex;
  align-items: center;
  gap: 9px;
  margin-right: 17px;
}
.radio input {
  width: 18px;
  height: 18px;
  border: 1px solid #d9d9d9;
  border-radius: 50%;
  background: #fff;
  appearance: none;
}
.radio input:checked {
  border: 1px solid #2970ff;
  background: radial-gradient(circle, #2970ff 4px, #fff 5px);
}
.custom {
  margin: -11px 0 0 131px;
  padding: 0 13px;
  background: #f7f8fa;
}
.custom-head {
  display: flex;
  align-items: center;
  justify-content: space-between;
  height: 50px;
  padding-top: 6px;
  border-bottom: 2px solid #ebecee;
}
.custom-head h3 {
  font-size: 15px;
  font-weight: 500;
}
.custom-head a {
  color: #2970ff;
}
.custom-caption {
  margin: 12px 0 5px;
  color: #8c8c8c;
  font-size: 14px;
}
.preview {
  display: flex;
  gap: 9px;
  padding: 4px 5px;
  border-radius: 2px;
  background: #fff;
}
.preview-title {
  width: 112px;
  border-radius: 12px;
  background: #d9edf2;
  color: #969696;
  font-size: 18px;
  font-style: italic;
  line-height: 37px;
  text-align: center;
}
.preview-content {
  flex: 1;
  padding-left: 14px;
  background: #f9fafc;
  font-size: 20px;
  font-weight: 700;
  line-height: 37px;
}
.style-form {
  display: flex;
  gap: 12px;
  padding-top: 19px;
}
.style-form h4, .style-label {
  font-size: 14px;
  font-weight: 500;
}
.style-fields {
  width: 301px;
}
.style-fields .segment {
  width: 100%;
  margin-top: 4px;
}
.style-label {
  display: block;
  margin: 19px 0 4px;
}
.style-fields input[type="text"] {
  height: 34px;
  font-size: 14px;
}
.style-fields .size-input[type="text"] {
  padding-top: 4px;
}
.text-row, .bg-row {
  display: flex;
  align-items: center;
}
.text-row {
  gap: 14px;
  margin-top: 9px;
}
.bg-row {
  justify-content: space-between;
  margin: 18px 0 4px;
}
.bg-fields {
  display: grid;
  grid-template-columns: 1fr 1fr;
  gap: 13px;
}
.style-fields .bg-fields input {
  padding: 0 8px 6px;
  font-size: 18px;
}
.color {
  display: flex;
  align-items: center;
  width: 142px;
  height: 34px;
  padding-left: 7px;
  border: 1px solid #d9d9d9;
  border-radius: 2px;
  background: #fff;
}
.bg-fields .color {
  width: auto;
}
.style-fields .color input[type="text"] {
  height: 30px;
  padding: 0 9px;
  border: 0;
}
.swatch {
  flex: none;
  width: 21px;
  height: 20px;
  border: 1px solid #d3d3d3;
}
.swatch.gray { background: #969696; }
.swatch.ice { background: #d9edf2; }
.style-fields .segment.bi {
  width: 82px;
  margin: 0;
}
.bi button {
  height: 34px;
  font-size: 20px;
  font-weight: 400;
}
.bi .italic {
  font-family: "Liberation Serif", serif;
  font-style: italic;
}
.css-switch {
  position: relative;
  display: flex;
}
.css-switch input {
  width: 49px;
  height: 21px;
  border-radius: 11px;
  background: #bfbfbf;
  appearance: none;
}
.css-switch input::after {
  content: "";
  position: absolute;
  top: 2px;
  left: 2px;
  width: 16px;
  height: 17px;
  border-radius: 50%;
  background: #fff;
}
.css-switch span {
  position: absolute;
  right: 9px;
  color: #fff;
  font-size: 10px;
  font-weight: 600;
  line-height: 21px;
}
.modal-foot {
  display: flex;
  flex: none;
  justify-content: flex-end;
  gap: 9px;
  padding: 27px;
}
```
FILE: script.js
```js
// draw the share QR code, one rect per dark run
const rows = [
  "11111110010010110110101111111",
  "10000010101101001111001000001",
  "10111010010110111010101011101",
  "10111010110011010110001011101",
  "10111010001101101001101011101",
  "10000010110110110100101000001",
  "11111110101010101010101111111",
  "00000000011011001100100000000",
  "11111011010000110111011010110",
  "10001001101101011000101101011",
  "01110110010010110111010110100",
  "11010011101110001001001011001",
  "00111010010001111110110100110",
  "10100101110110101001011010010",
  "01011110001111110110010011101",
  "11100101111000111011100101011",
  "10010110011011010110111110010",
  "11001001100111101101001011101",
  "10110110111010010111110010100",
  "10011001011101100110101111011",
  "11010110100110111101111110110",
  "00000000110101001011100011001",
  "11111110011011110110101011111",
  "10000010110100101101100010110",
  "10111010101101110011111110101",
  "10111010111010001110010110010",
  "10111010011011010101101011011",
  "10000010100110111010010110110",
  "11111110110101101101111101100"
];
const qr = document.getElementById("qr");
let d = "";
rows.forEach((row, y) => {
  for (const run of row.matchAll(/1+/g)) {
    d += `M${run.index} ${y}h${run[0].length}v1h-${run[0].length}z`;
  }
});
const path = document.createElementNS("http://www.w3.org/2000/svg", "path");
path.setAttribute("d", d);
qr.appendChild(path);
```
